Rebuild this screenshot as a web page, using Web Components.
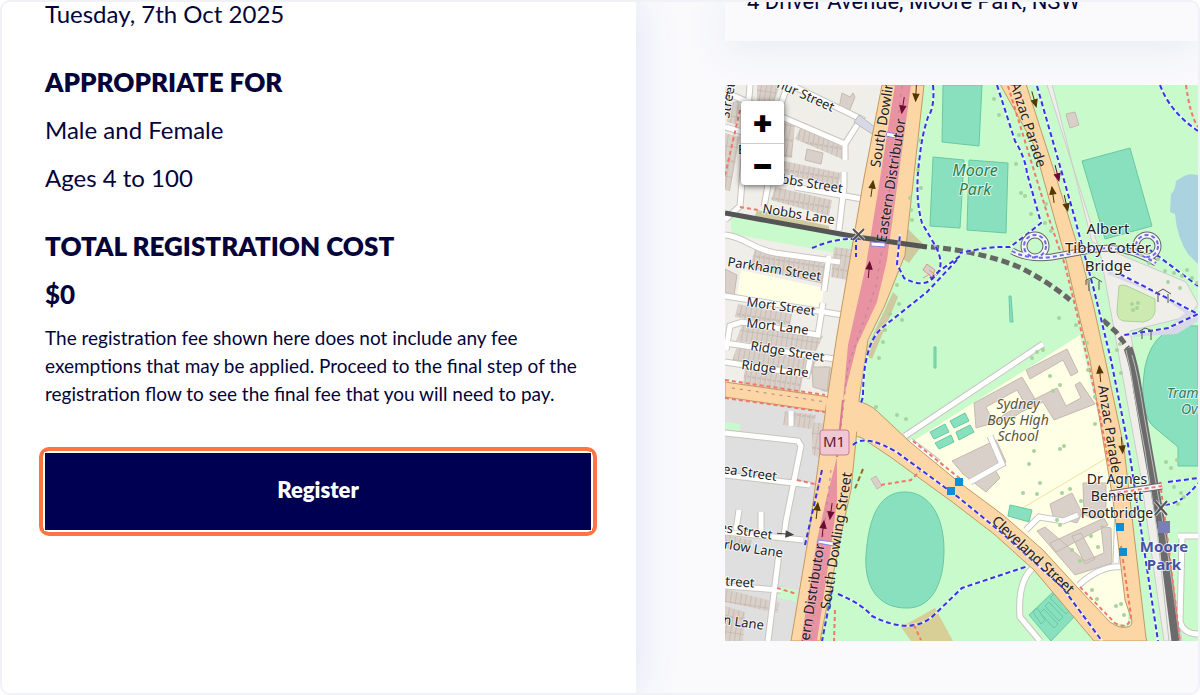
<!DOCTYPE html>
<html lang="en">
<head>
<meta charset="utf-8">
<meta name="viewport" content="width=device-width, initial-scale=1">
<title>Registration</title>
<style>
  body { margin: 0; background: #fff; font-family: Lato, "Open Sans", sans-serif; color: #04043a; }
</style>
</head>
<body>
<registration-page>
  <program-details slot="details">
    <detail-block><p>Tuesday, 7th Oct 2025</p></detail-block>
    <detail-block heading="APPROPRIATE FOR">
      <p>Male and Female</p>
      <p>Ages 4 to 100</p>
    </detail-block>
    <detail-block heading="TOTAL REGISTRATION COST">
      <p class="price">$0</p>
    </detail-block>
    <fee-note>The registration fee shown here does not include any fee exemptions that may be applied. Proceed to the final step of the registration flow to see the final fee that you will need to pay.</fee-note>
    <register-button>Register</register-button>
  </program-details>
  <address-card slot="venue">4 Driver Avenue, Moore Park, NSW</address-card>
  <venue-map slot="venue"></venue-map>
</registration-page>

<script>
const define = (name, html, setup) => {
  const template = document.createElement('template');
  template.innerHTML = html;
  customElements.define(name, class extends HTMLElement {
    constructor() {
      super();
      this.attachShadow({ mode: 'open' }).append(template.content.cloneNode(true));
    }
    connectedCallback() { if (setup) setup(this, this.shadowRoot); }
  });
};

define('registration-page', `
  <style>
    :host { display: grid; grid-template-columns: minmax(0, 634fr) minmax(0, 562fr); box-sizing: border-box;
      min-height: 100vh; border: 2px solid #f1f1f8; border-radius: 10px; overflow: hidden; background: #fafafd; }
    main { position: relative; z-index: 1; background: #fff; padding: 0 45px 32px 43px; box-shadow: 0 0 40px rgba(60, 80, 190, .14); }
    aside { display: flex; flex-direction: column; gap: 44px; padding-left: 89px; }
  </style>
  <main><slot name="details"></slot></main>
  <aside><slot name="venue"></slot></aside>`);

define('program-details', `
  <style>:host { display: flex; flex-direction: column; }</style>
  <slot></slot>`);

define('detail-block', `
  <style>
    :host { display: flex; flex-direction: column; gap: 16px; margin-bottom: 36px; }
    :host(:first-child) { margin-bottom: 40px; }
    :host(:nth-child(3)) { margin-bottom: 14px; }
    h2 { margin: 0; font-size: 26px; line-height: 32px; font-weight: 800; }
    h2[hidden] { display: none; }
    ::slotted(p) { margin: 0; font-size: 24px; line-height: 32px; }
    :host(:first-child) ::slotted(p) { line-height: 24px; }
    ::slotted(.price) { font-size: 26px !important; font-weight: 900; }
  </style>
  <h2 hidden></h2><slot></slot>`, (host, root) => {
    const text = host.getAttribute('heading');
    const h = root.querySelector('h2');
    h.hidden = !text;
    h.textContent = text || '';
  });

define('fee-note', `
  <style>:host { display: block; font-size: 19px; line-height: 28px; }</style>
  <slot></slot>`);

define('register-button', `
  <style>
    :host { display: block; margin: 39px -6px 0 -6px; border: 4px solid #ff7442; border-radius: 10px; padding: 1px; }
    button { display: block; width: 100%; height: 79px; border: 1px solid #fff; background: #000052; color: #fff;
      font: 800 22px/28px Lato, sans-serif; padding: 0 0 4px; cursor: pointer; background-clip: padding-box; }
  </style>
  <button type="button"><slot></slot></button>`);

define('address-card', `
  <style>
    :host { display: block; background: #fafafd; box-shadow: 0 4px 44px rgba(60, 80, 150, .11); }
    address { margin-top: -14px; padding: 0 22px 25px; font: 400 22px/28px Roboto, sans-serif; }
  </style>
  <address><slot></slot></address>`);

// Minor street labels: x, y of the baseline start, rotation, text.
const streets = [
  [776, 87, 24, 'hur Street'], [773, 182, 9, 'obbs Street'], [762, 213, 9, 'Nobbs Lane'],
  [727, 266, 9, 'Parkham Street'], [746, 306, 8, 'Mort Street'],
  [746, 327, 7, 'Mort Lane'], [750, 350, 9, 'Ridge Street'], [741, 369, 7, 'Ridge Lane'],
  [713, 472, 8, 'lsea Street'], [711, 530, 9, 'nes Street'], [708, 546, 9, 'Barlow Lane'],
  [718, 585, 4, 'Street'], [715, 623, 8, 'on Lane'],
  [729, 119, -80, 'Street'], [718, 96, 20, 'st'], [738, 154, 0, 'B']
];
// Main road labels, same fields.
const roads = [
  [880, 168, -81, 'South Dowling'], [886, 243, -81, 'Eastern Distributor'],
  [1010, 84, 72, 'Anzac Parade'], [805, 668, -81, 'Eastern Distributor'],
  [830, 610, -81, 'South Dowling Street'], [1098, 386, 81, 'Anzac Parade'], [991, 522, 43, 'Cleveland Street']
];
// Centred place names: x, y, class, text.
const places = [
  [975, 176, 'park', 'Moore'], [975, 195, 'park', 'Park'],
  [1018, 409, 'school', 'Sydney'], [1018, 425, 'school', 'Boys High'], [1018, 441, 'school', 'School'],
  [1108, 234, 'bridge', 'Albert'], [1108, 253, 'bridge', 'Tibby Cotter'], [1108, 271, 'bridge', 'Bridge'],
  [1117, 484, 'foot', 'Dr Agnes'], [1117, 501, 'foot', 'Bennett'], [1117, 518, 'foot', 'Footbridge'],
  [1164, 552, 'stop', 'Moore'], [1164, 570, 'stop', 'Park'],
  [1195, 398, 'oval', 'Tramway'], [1195, 414, 'oval', 'Oval'], [834, 447, 'shield', 'M1']
];
const trees = [[994,99],[999,115],[1019,135],[1016,164],[1021,193],[1025,196],[1031,214],[1046,204],[1045,223],[1051,231],[919,140],[918,170],[910,198],[921,188],[911,210],[912,220],[897,285],[899,304],[890,314],[902,320],[885,330],[883,342],[879,358],[876,407],[897,415],[906,419],[1059,318],[1076,325],[1087,343],[1088,370],[1095,397],[1095,424],[1060,385],[1053,391],[1050,376],[1032,358],[1037,352],[1043,350],[1120,344],[1117,350],[1121,373],[1034,451],[1029,464],[1060,449],[1064,446],[1040,483],[1023,493],[1037,494],[1062,493],[1070,489],[1081,501],[1057,520],[1060,525],[1072,550],[1091,536],[1098,547],[1080,561],[1092,590],[1097,599],[1116,606],[1121,604],[1124,615],[1166,462],[1171,468],[1177,460],[1174,487],[1181,493],[1178,504],[1184,497],[1141,255],[1149,263],[1158,259],[1165,271],[1174,273],[1182,276],[1187,270],[1192,278],[1197,283],[1168,282],[1180,288],[1132,304],[1137,308],[1133,310],[1138,303]];
const arrows = [[903,105,189,'m'],[916,93,183,'o'],[1034,99,164,'od'],[1057,173,166,'md'],[1053,195,-8,'o'],[1066,203,168,'od'],[872,189,8,'o'],[869,270,5,'m'],[817,511,6,'o'],[831,511,188,'md'],[823,529,7,'m'],[1100,374,-5,'o'],[1122,445,175,'od'],[785,534,95,'g']];

define('venue-map', `
  <style>
    :host { display: block; position: relative; }
    svg { display: block; width: 100%; height: auto; aspect-ratio: 473 / 556; background: #f0eee8; }
    .zoom { position: absolute; top: 16px; left: 16px; display: flex; flex-direction: column; border-radius: 4px;
      background: #fff; box-shadow: 0 1px 6px rgba(0, 0, 0, .65); }
    .zoom button { width: 43px; height: 42px; padding: 0; border: 0; background: none; color: #000; cursor: pointer;
      font: 900 32px/40px Inter, "DejaVu Sans", sans-serif; }
    .zoom button + button { border-top: 1px solid #ccc; }
    text { font-family: "Noto Sans", sans-serif; font-size: 13px; fill: #222; stroke: #fff; stroke-opacity: .7; stroke-width: 2px; paint-order: stroke; stroke-linejoin: round; }
    .road { font-size: 14px; stroke-opacity: .2; }
    .park { font-size: 16px; font-style: italic; fill: #2b8050; }
    .school { font-size: 14px; font-style: italic; fill: #5b5536; }
    .oval { font-size: 14px; font-style: italic; fill: #2b8066; }
    .bridge { font-size: 15px; } .foot { font-size: 14px; }
    .stop { font-size: 15px; font-weight: 700; fill: #4651a3; }
    .shield { font-size: 15px; fill: #5b2032; stroke: none; }
    .center { text-anchor: middle; }
    .w { fill: none; stroke: #c9c5c0; stroke-width: 7px; } .wi { fill: none; stroke: #fff; stroke-width: 5px; }
    .blue { fill: none; stroke: #fff; stroke-opacity: .5; stroke-width: 3px; }
    .blued { fill: none; stroke: #3434e6; stroke-width: 2px; stroke-dasharray: 5 3; }
    .red { fill: none; stroke: #f3766a; stroke-width: 2px; stroke-dasharray: 4 3; }
    .b { fill: #d9d0c9; stroke: #c6b9af; } .p { fill: #88e0be; stroke: #68c9a3; }
    .o { fill: #fcd6a4; stroke: #c29a62; } .m { fill: #e892a2; stroke: none; } .h { fill: url(#houses); stroke: none; }
    .gr { fill: #c8facc; }
    .thin { fill: none; stroke: #555; stroke-width: 1px; }
  </style>
  <svg viewBox="725 85 473 556" preserveAspectRatio="xMinYMin slice" role="img" aria-label="Map of Moore Park">
    <defs>
      <pattern id="houses" width="5" height="30" patternUnits="userSpaceOnUse" patternTransform="rotate(9)">
        <rect width="5" height="30" fill="#d9d0c9"/><path d="M0 0v30M0 0h5M2 15h3" stroke="#b9aa9f" stroke-width="1" fill="none"/>
      </pattern>
    </defs>
    <path fill="#f0eee8" d="M725 85h200v320H725z"/>
    <path fill="#dfdfdf" d="M725 397l108 14-6 60-34 170h-68z"/>
    <path class="gr" d="M920 85h278v556H790l60-220z"/>
    <path class="gr" d="M730 217l130 21-4 22-24-8-100-18zM725 422l15 2v7l-15-2zM776 586l22 4-2 12-20-5z"/>
    <path fill="#cfc99f" d="M757 210l72 16v7l-75-15zM905 226l18 18-14 19-9-6zM893 292l5 5-26 62-8-5z"/>
    <path fill="#ffffe5" d="M741 270l83 18-3 20-84-12zM910 443l170-108 50 220-2 70-20-3z"/>
    <path fill="#f4efc3" stroke="#ece59a" stroke-width="1" d="M1021 509l84-50"/>
    <path fill="#f0eee8" stroke="#ccc" d="M1047 85l53 167 40 220 24 169h18l-28-180-24-130 60-15 8-12-12-22-60-25-34-15-40-158z"/>
    <path fill="#cdebb0" stroke="#add19e" d="M1119 286q3-2 8 0l28 13v12q-1 9-12 11l-19-1q-7-1-7-10z"/>
    <path fill="#aad3df" d="M1198 175q-9-2-14 1l-8 5q-1 10-5 13l-1 18 5 2q2 24 13 40l10 10z"/>

    <!-- sports grounds -->
    <g class="p">
      <path d="M943 85h39l-3 61-37-4zM933 157l31 3-4 68-30-2zM969 160l39 3-2 70-39-3zM1082 161l48-13 22 78-47 13z"/>
      <path d="M1198 326q-44-4-53 41-7 46 9 60l24 20v19h20z"/>
      <path d="M905 492c24 0 39 24 39 58 0 36-14 59-38 58-27 0-42-20-40-53 3-40 14-63 39-63z"/>
      <path d="M1009 296h2l2 26h-3zM934 347h2v21h-2zM1010 505l22 5-3 12-21-6zM1053 592l23 23-25 26-22-26zM930 432l15-8 4 8-15 7zM950 421l15-8 4 8-15 7zM935 443l16-8 3 7-15 7zM956 432l14-7 4 7-15 8z"/>
    </g>
    <path fill="none" stroke="#68c9a3" d="M1050 598l4-4 16 16-4 4zM1045 606l4-4 14 15-4 4zM1040 613l4-4 14 15-4 4zM1033 612l4-4 8 12-4 4z"/>
    <path fill="#d8cf96" d="M901 627l34-19 18 33h-42z"/>

    <!-- terraces and other buildings -->
    <g class="h">
      <path d="M757 85h23l-10 28-13-5zM727 105l13-6-3 26-10-3zM725 133l15 4-10 54-5-1zM784 122l11 1-3 35-8-1zM803 122l42 20-3 17-47-20zM784 161l57 12-3 14-54-13zM775 187l57 13-3 16-58-16zM755 248l76 17-3 20-78-17zM834 247l23 3-4 31-22-4zM738 304l54 10-2 12-55-9zM742 325l81 11-7 15-80-10zM737 346l80 12-6 17-80-11zM745 367l58 9-3 17-57-8zM824 366l14 3-5 24-12-2z"/>
      <path d="M785 411l31 4-5 14-28-4zM812 422l14 2-7 34-7-4zM725 589l55 14-3 10-52-11zM725 606l20 6-2 29h-18zM725 535l27 5-3 12-24-4z"/>
    </g>
    <g class="b">
      <path d="M842 93l8 4 3-4 2 4-6 15-10-4zM807 149l16 4-2 11-16-4zM812 367h18l-3 24-14-4zM725 269l12 6-3 20-9-3zM1066 114l9-2 4 13-9 3z"/>
      <path d="M1026 370l41-21 11 23-7 4-8-16-33 19zM974 403l48-26 13 22-10 5 32-16 9 18 15-8-6-13 5-3 15 22-41 16-11-18-22 10-7 5-38 11z"/>
      <path fill="#ffffe5" d="M986 407l31-17 7 12-31 20z"/>
      <path d="M952 461l44-21 10 22-13 5 7 11-14 14-23-18zM1050 504l22-11 10 20-5 10-24-7zM1083 483h23v32l-14 4-8-5zM1037 531l8-4 40 34 19-8-3-27 10 2 1 35-37 12zM1050 543l54-25 4 7-52 27zM1072 536l9-3 14 26-10 5zM871 479l5-3 6 10-5 3z"/>
    </g>

    <!-- minor streets -->
    <g class="w"><path id="minor" d="M725 92l50 22 70 30 16-25-70-34M845 144v16M725 127l18 5M725 220l15-14 10-121M764 207l4-22M781 104l6-17M844 172v14l-5 44M795 187l73 13M725 235c18 1 27 14 50 18l65 9M829 256l-5 35M725 296l124 20M823 303l-5 32-26-4-50-9-12 4-4 24M725 343l117 17M725 362l82 13 4-20M791 411v15M725 433l73 8 3 5-15 75-2 15M725 475l85 10M725 532l78 8M739 510l-3 20M761 512v23M779 553l-11 88M725 586l56 4M1043 344l-138 92M910 441l25 19-12 10M1118 505l-2 58M1037 565q-20 12-17 52l20 24M1026 530l13-13 24 4 15-6M1043 550l-8 10M1079 585q22-20 43-18M970 482l32-18-12-28M1178 536h20M1182 538l-2 84q4 12 18 12"/></g>
    <g class="wi"><use href="#minor"/></g>
    <path d="M859 115l17 13-4 6-18-12z" fill="#d8d8e6" stroke="#bbb"/>
    <path d="M1110 271l66 30 22 15v5l-21 13-49 3 40-9 17-15-24-17-54-22z" fill="#d8d8e6"/>

    <!-- tunnelled railway and tram line -->
    <path d="M931 247q48 4 88 20 30 15 51 33M1103 320l13 12 12 16" fill="none" stroke="#666" stroke-width="5" stroke-dasharray="8 4"/>
    <path d="M1128 348q6 16 10 44l10 59 14 79 14 111" fill="none" stroke="#6b6b6b" stroke-width="9"/>
    <path d="M1126 350q5 20 8 42l11 59 12 79 12 111M1132 355q6 20 12 60l22 125 14 101" fill="none" stroke="#bdbdbd" stroke-width="1"/>

    <!-- major roads -->
    <path class="o" stroke-width="1" d="M725 382l104 15-1 15-103-15z"/>
    <path class="o" d="M852 399q18 5 25 12l33 31 50 41 43 32 40 35 34 37 33 35q10 7 17 5 5 0 5-6l-7-21-12-100-10-60-13-80-14-57-10-43-32-115-34-61h26l31 96 25 80 12 48 12 55 18 85 22 190 1 3h-53l-60-71-40-36-43-33-62-45-27-18q-19-8-26 10z"/>
    <path class="o" d="M882 85h42l-19 170-20 50-17 35-9 60-3 40-5 50-9 40-22 111h-29l17-101 19-140 10-65 12-70 15-87z"/>
    <path d="M826 398l32 3 8 6v18l-14 10-25 0z" fill="#fcd6a4"/>
    <path class="m" d="M895 85h16l-13 95-11 80-10 42-20 43-14 55 5-55 18-80 13-80zM837 457l-11 43-9 40-16 101h16l15-101 5-40z"/>
    <path d="M843 400l-6 57" stroke="#dd778b" stroke-width="2"/>
    <path d="M902 86l-18 150-8 50-28 80-8 70M831 470l-20 170M732 388l94 14" fill="none" stroke="#a9889a" stroke-width="1" stroke-dasharray="3 5"/>
    <path d="M725 213l132 24 70 10" fill="none" stroke="#555" stroke-width="5"/>

    <!-- footways -->
    <g class="blue"><path id="foot" d="M933 85q2 22-5 32-6 18-8 38-6 40 2 68l14 24q10 20-2 30-10 12-30 1l-7-14 3-30M997 85l18 56q10 16 12 32l14 50-15 12-16 12q-20-1-50 6M1037 86l35 122 22 82 17 70 18 90 29 191M1160 85q10 27 38 46M930 278l30-22M957 260l-30 32-44 35q-20 16-20 70l-2 6M853 445q12-12 45 8l60 44 44 36 60 54 40 54M838 594q24 10 34 22 40 20 62-1l28-27 66-22M1120 274l78 40-30 14-44 7M1150 250l48 36M1168 482l30-4M1165 505q18-2 33-22M812 248q24-10 42-9"/></g>
    <use href="#foot" class="blued"/>
    <path d="M822 470l-17 75M832 590l-10 51M856 237v20" class="blued"/>
    <g class="red"><path d="M1008 86l39 127 18 52 15 61 20 90 9 50M725 380l100 15M725 398l100 14M740 207l18 3M740 110l-16 70M797 480l22 5M777 588l20 6M913 441l50 40M1080 587l35 36q14 8 16-7l-10-70M881 485l30-5 9-9M1186 85q4 30 12 42M914 625l7 15M1160 482l8 60 12 99M835 610l-1 31M1110 494l50-8"/></g>

    <!-- spiral ramps and deck of the footbridge -->
    <g fill="none" stroke="#666" stroke-width="7"><path d="M1012 251q16 9 40 6l44-8q30-4 60 14M1110 494l52-8"/><circle cx="1035" cy="246" r="11"/><circle cx="1147" cy="246" r="11"/></g>
    <g fill="none" stroke="#f3f3f8" stroke-width="5"><path d="M1012 251q16 9 40 6l44-8q30-4 60 14M1110 494l52-8"/><circle cx="1035" cy="246" r="11"/><circle cx="1147" cy="246" r="11"/></g>
    <g fill="none" stroke="#6a6ae8" stroke-dasharray="4 3" stroke-width="2"><path d="M1012 251q16 9 40 6l44-8q30-4 60 14"/><circle cx="1035" cy="246" r="11"/><circle cx="1147" cy="246" r="11"/></g>
    <path d="M1110 494l52-8" class="red"/>
    <path class="thin" d="M1086 285v-5l8-3 8 5M1089 280v11M1099 281v9M1155 294l8-5 8 5M1158 293v9M1168 294v9M1138 332l7-4 8 3M1142 330v9M1151 331v9"/>
    <path d="M853 229l11 11M864 229l-11 11M1155 501l12 14M1167 501l-12 14" fill="none" stroke="#fff" stroke-opacity=".6" stroke-width="4"/>
    <path d="M853 229l11 11M864 229l-11 11M1155 501l12 14M1167 501l-12 14" fill="none" stroke="#555" stroke-width="2"/>
    <g stroke="#8888d8" fill="#fff"><path d="M887 132l9 2-1 4-9-2zM871 242l14 1v4l-14-1zM818 540l16 2v4l-16-3z"/></g>
    <path d="M863 469l-9 22" stroke="#907020" fill="none" stroke-width="2" stroke-dasharray="5 3"/>
    <path d="M923 270l4-6 8 6-3 7zM923 278l7-4M929 270l8 6" stroke="#e49384" fill="#d9d0c9"/>
    <g fill="#a9d39c" class="trees"></g>
    <g class="arrows"></g>
    <path fill="#0c8ed8" d="M955 478h8v8h-8zM947 487h8v8h-8zM1116 523h8v8h-8zM1119 548h8v8h-8z"/>
    <path fill="#7b80b4" d="M1158 521h12v12h-12z"/>
    <rect x="820" y="430" width="29" height="25" rx="3" fill="#f0c7d2" stroke="#c77e96"/>
    <g class="labels"></g>
  </svg>
  <div class="zoom" role="group" aria-label="Map zoom">
    <button type="button" aria-label="Zoom in">+</button>
    <button type="button" aria-label="Zoom out">−</button>
  </div>`, (host, root) => {
    root.querySelector('.trees').innerHTML = trees.map(([x, y]) => `<circle cx="${x}" cy="${y}" r="2"/>`).join('');
    root.querySelector('.arrows').innerHTML = arrows.map(([x, y, turn, kind]) => {
      const ink = { m: '#6b0c33', o: '#533703', g: '#444' }[kind[0]];
      return `<path transform="translate(${x} ${y}) rotate(${turn})" d="M0 8v-9M0 -8l-3 7h6z" fill="${ink}" stroke="${ink}"/>`;
    }).join('');
    const along = kind => ([x, y, turn, t]) => `<text class="${kind}" transform="translate(${x} ${y}) rotate(${turn})">${t}</text>`;
    root.querySelector('.labels').innerHTML = streets.map(along('street')).join('') + roads.map(along('road')).join('') +
      places.map(([x, y, kind, t]) => `<text class="center ${kind}" x="${x}" y="${y}">${t}</text>`).join('');
  });
</script>
</body>
</html>
